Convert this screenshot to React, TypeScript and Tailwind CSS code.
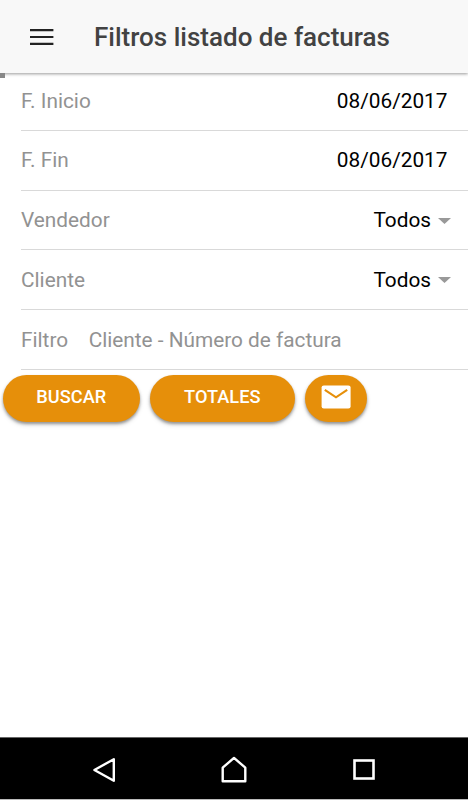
import type { ReactNode } from 'react';

interface FilterRowProps {
  label: string;
  value: string;
  select?: boolean;
}

const filters: FilterRowProps[] = [
  { label: 'F. Inicio', value: '08/06/2017' },
  { label: 'F. Fin', value: '08/06/2017' },
  { label: 'Vendedor', value: 'Todos', select: true },
  { label: 'Cliente', value: 'Todos', select: true },
];

function FilterRow({ label, value, select }: FilterRowProps) {
  return (
    <div className="ml-[21px] flex h-[59.75px] items-center justify-between border-b border-[#d9d9d9] pt-[1.5px]">
      <span className="text-[#929292]">{label}</span>
      <span className={`flex items-center text-black ${select ? 'pr-[17px]' : 'pr-[20.5px]'}`}>
        {value}
        {select && (
          <svg className="ml-[7px] h-[6px] w-[13px]" viewBox="0 0 13 6">
            <path d="M0 0h13L6.5 6z" fill="#999" />
          </svg>
        )}
      </span>
    </div>
  );
}

function Button({ className, children }: { className: string; children: ReactNode }) {
  return (
    <button
      className={`flex h-[47px] shrink-0 items-center justify-center rounded-full bg-[#e68f0a] pb-[2px] text-[18.2px] font-medium text-white shadow-[0_2px_3px_rgba(0,0,0,0.35),0_3px_5px_rgba(0,0,0,0.12)] ${className}`}
    >
      {children}
    </button>
  );
}

export default function App() {
  return (
    <div className="flex h-[800px] w-[468px] flex-col overflow-hidden bg-white font-['Roboto',sans-serif] text-[20.8px] leading-none">
      {/* Toolbar */}
      <header className="relative flex h-[73px] shrink-0 items-center bg-[#f8f8f8] shadow-[0_1px_3px_rgba(0,0,0,0.4)]">
        <button className="ml-[30px]">
          <svg className="h-[16px] w-[24px]" viewBox="0 0 24 16">
            <path d="M0 1.1h23.4M0 8h23.4M0 14.8h23.4" stroke="#222" strokeWidth="2.2" />
          </svg>
        </button>
        <h1 className="ml-[40px] text-[26px] font-medium text-[#424242]">Filtros listado de facturas</h1>
        <span className="absolute left-0 top-[73px] h-[5px] w-[5px] bg-[#888]" />
      </header>

      {/* Filters */}
      <main className="-mt-[2px] flex-1">
        {filters.map((filter) => (
          <FilterRow key={filter.label} {...filter} />
        ))}
        <div className="ml-[21px] flex h-[59.75px] items-center border-b border-[#d9d9d9] pt-[1.5px] text-[#929292]">
          <span>Filtro</span>
          <span className="ml-[20.5px]">Cliente - Número de factura</span>
        </div>

        <div className="flex gap-[9.5px] pl-[2.5px] pt-[5px]">
          <Button className="w-[137.5px]">BUSCAR</Button>
          <Button className="w-[145.5px]">TOTALES</Button>
          <Button className="w-[62px]">
            <svg className="h-[24px] w-[30px]" viewBox="0 0 30 24">
              <rect x="0.6" y="0.4" width="29" height="23" rx="2.2" fill="#fff" />
              <path d="M3.8 4.8L15 12.3L26.2 4.8" fill="none" stroke="#e68f0a" strokeWidth="2.2" />
            </svg>
          </Button>
        </div>
      </main>

      {/* System navigation */}
      <footer className="flex h-[63px] shrink-0 items-center justify-between border-y border-t-[#666] border-b-[#bbb] bg-black px-[92px] pt-[3px]">
        <svg className="h-[26px] w-[24px]" viewBox="0 0 24 26" fill="none" stroke="#fff" strokeWidth="2.4">
          <path d="M21.8 2.2v21.6L2.4 13z" strokeLinejoin="round" />
        </svg>
        <svg className="h-[28px] w-[28px]" viewBox="0 0 28 28" fill="none" stroke="#fff" strokeWidth="2.4">
          <path d="M2.7 25.2V11.7L14 1.9L25.3 11.7V25.2z" strokeLinejoin="round" />
        </svg>
        <svg className="h-[24px] w-[24px]" viewBox="0 0 24 24" fill="none" stroke="#fff" strokeWidth="2.6">
          <rect x="2.5" y="2.5" width="19" height="18" />
        </svg>
      </footer>
    </div>
  );
}
